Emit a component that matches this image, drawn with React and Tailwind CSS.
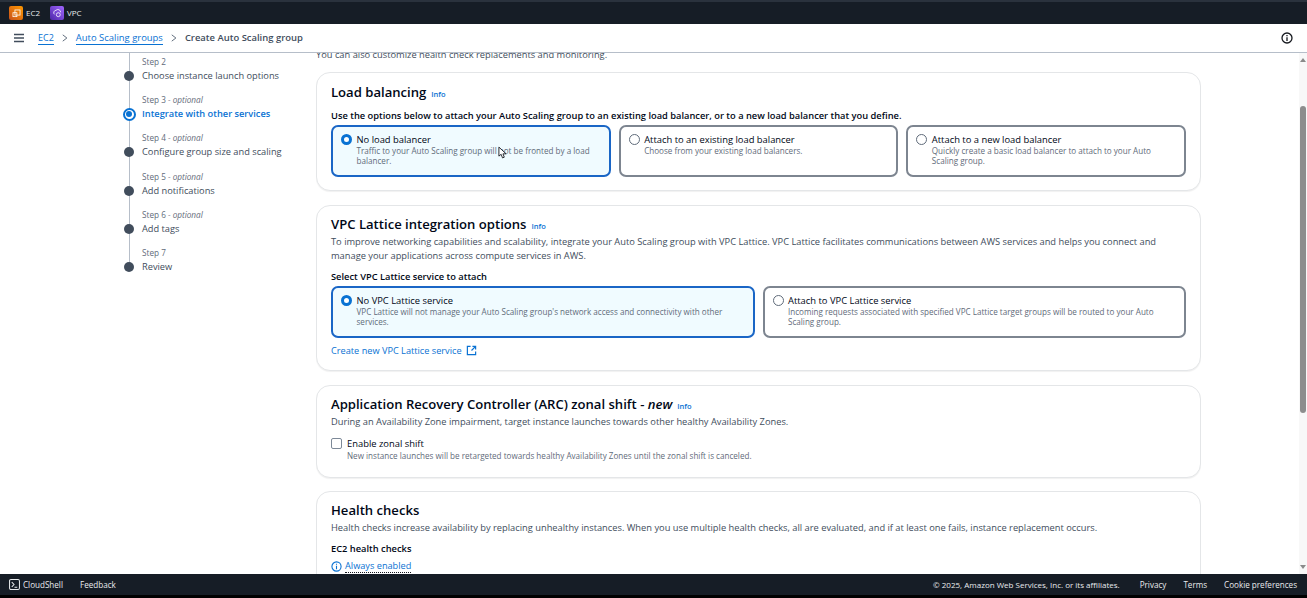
import React from "react";

const Radio = ({ on }) =>
  on ? (
    <span className="mt-[1px] h-[11px] w-[11px] shrink-0 rounded-full border-[3.5px] border-[#0972d3] bg-white" />
  ) : (
    <span className="mt-[1px] h-[11px] w-[11px] shrink-0 rounded-full border border-[#5f6b7a] bg-white" />
  );

const Tile = ({ on, title, desc }) => (
  <div
    className={
      "flex h-[52px] gap-[4.5px] rounded-[7px] border-2 pl-[8px] pr-[8px] pt-[5.5px] " +
      (on ? "border-[#1a66c6] bg-[#f0fbff]" : "border-[#7d8590] bg-white")
    }
  >
    <Radio on={on} />
    <div className="min-w-0">
      <div className="text-[9.4px] font-medium leading-[13px] text-[#000716]">{title}</div>
      <div className="text-[8.1px] leading-[10.5px] text-[#5f6b7a]">{desc}</div>
    </div>
  </div>
);

const Info = () => <span className="ml-[5px] text-[7.5px] font-semibold text-[#0972d3]">Info</span>;

const Card = ({ className, children }) => (
  <section className={"rounded-[14px] border border-[#e4e6e8] bg-white px-[14px] shadow-[0_1px_1px_rgba(0,7,22,0.06)] " + className}>
    {children}
  </section>
);

const Dot = ({ active }) =>
  active ? (
    <span className="z-10 flex h-[13px] w-[13px] shrink-0 items-center justify-center rounded-full border-2 border-[#0972d3] bg-white">
      <span className="h-[6px] w-[6px] rounded-full bg-[#0972d3]" />
    </span>
  ) : (
    <span className="z-10 h-[10px] w-[10px] shrink-0 rounded-full bg-[#414d5c]" />
  );

const Step = ({ n, opt, title, active }) => (
  <div className="h-[38.2px]">
    <div className="pl-[142px] text-[8.2px] leading-[12px] text-[#5f6b7a]">
      Step {n}
      {opt && <span className="italic"> - optional</span>}
    </div>
    <div className="mt-[1px] flex h-[14px] items-center">
      <div className="flex w-[142px] justify-end pr-[6px]">
        <div className="flex w-[14px] justify-center">
          <Dot active={active} />
        </div>
      </div>
      <span className={"text-[9.25px] leading-[14px] " + (active ? "font-semibold text-[#0972d3]" : "text-[#414d5c]")}>{title}</span>
    </div>
  </div>
);

const Logo = ({ from, to, children }) => (
  <span className="flex h-[14px] w-[14px] items-center justify-center rounded-[2px]" style={{ background: `linear-gradient(45deg, ${from}, ${to})` }}>
    {children}
  </span>
);

const Chevron = () => (
  <svg viewBox="0 0 8 10" className="mx-[8px] h-[10px] w-[6px]" fill="none" stroke="#5f6b7a" strokeWidth="1.300">
    <path d="M1 0.800l5.500 4.200-5.500 4.200" />
  </svg>
);

export default function App() {
  return (
    <div className="flex h-[598px] w-[1307px] flex-col overflow-hidden bg-white font-['Open_Sans','Noto_Sans',sans-serif] text-[#000716]">
      {/* top nav */}
      <header className="flex h-[24px] shrink-0 items-center border-t-[2px] border-[#2a323d] bg-[#161d26] pl-[9px] text-[8px] font-medium text-[#e9ebed]">
        <Logo from="#c8511b" to="#ff9900">
          <svg viewBox="0 0 14 14" className="h-[11px] w-[11px]" fill="none" stroke="#fff" strokeWidth="1">
            <rect x="5" y="2.500" width="6.500" height="6.500" />
            <rect x="2.500" y="6" width="5" height="5" />
          </svg>
        </Logo>
        <span className="ml-[3px] w-[14px]">EC2</span>
        <span className="ml-[10px]">
          <Logo from="#4d27a8" to="#a166ff">
            <svg viewBox="0 0 14 14" className="h-[11px] w-[11px]" fill="none" stroke="#fff" strokeWidth="1">
              <path d="M3 8a3 3 0 0 1 2-5 3.500 3.500 0 0 1 6 2.500" />
              <circle cx="8" cy="8.500" r="2.500" />
            </svg>
          </Logo>
        </span>
        <span className="ml-[3px]">VPC</span>
      </header>

      {/* breadcrumb */}
      <div className="flex h-[29px] shrink-0 items-center border-b border-[#b6bec9] pl-[14px] pr-[14px] text-[9.45px] font-semibold">
        <svg viewBox="0 0 10 10" className="mr-[14px] h-[10px] w-[10px]" stroke="#414d5c" strokeWidth="1.300">
          <path d="M0 1.500h10M0 5h10M0 8.500h10" />
        </svg>
        <span className="border-b border-[#0972d3] text-[9px] font-medium leading-[12px] text-[#0972d3]">EC2</span>
        <Chevron />
        <span className="border-b border-[#0972d3] font-medium leading-[12px] text-[#0972d3]">Auto Scaling groups</span>
        <Chevron />
        <span className="text-[#414d5c]">Create Auto Scaling group</span>
        <svg viewBox="0 0 12 12" className="ml-auto h-[12px] w-[12px]" fill="none" stroke="#16191f" strokeWidth="1.300">
          <circle cx="6" cy="6" r="5" />
          <path d="M6 5.200V9M6 3v1.200" />
        </svg>
      </div>

      {/* body */}
      <div className="flex min-h-0 flex-1 overflow-hidden">
        {/* steps */}
        <nav className="relative w-[316px] shrink-0 pt-[3px]">
          <div className="absolute left-[129px] top-0 h-[215px] w-px bg-[#b6bec9]" />
          <Step n={2} title="Choose instance launch options" />
          <Step n={3} opt title="Integrate with other services" active />
          <Step n={4} opt title="Configure group size and scaling" />
          <Step n={5} opt title="Add notifications" />
          <Step n={6} opt title="Add tags" />
          <Step n={7} title="Review" />
        </nav>

        {/* content */}
        <main className="w-[885px] shrink-0 overflow-hidden">
          <p className="mt-[-4px] h-[23px] text-[9.3px] leading-[12px] text-[#414d5c]">
            You can also customize health check replacements and monitoring.
          </p>

          <Card className="relative h-[119px]">
            <h2 className="mt-[10px] text-[13.1px] font-semibold leading-[18px]">
              Load balancing<Info />
            </h2>
            <p className="mt-[6px] text-[9.3px] font-semibold leading-[13px]">
              Use the options below to attach your Auto Scaling group to an existing load balancer, or to a new load balancer that you define.
            </p>
            <div className="mt-[3px] grid grid-cols-3 gap-[8px]">
              <Tile on title="No load balancer" desc="Traffic to your Auto Scaling group will not be fronted by a load balancer." />
              <Tile title="Attach to an existing load balancer" desc="Choose from your existing load balancers." />
              <Tile title="Attach to a new load balancer" desc="Quickly create a basic load balancer to attach to your Auto Scaling group." />
            </div>
            <svg viewBox="0 0 10 14" className="absolute left-[181px] top-[73px] h-[13px] w-[9px]" fill="#fff" stroke="#16191f" strokeWidth="1">
              <path d="M1 1v10l2.500-2 1.500 4 2-.800-1.500-3.700H9z" />
            </svg>
          </Card>

          <Card className="mt-[14px] h-[166px]">
            <h2 className="mt-[9px] text-[13.1px] font-semibold leading-[18px]">
              VPC Lattice integration options<Info />
            </h2>
            <p className="mt-0 text-[9.3px] leading-[14px] text-[#414d5c]">
              To improve networking capabilities and scalability, integrate your Auto Scaling group with VPC Lattice. VPC Lattice facilitates communications between AWS services and helps you connect and manage your applications across compute services in AWS.
            </p>
            <p className="mt-[7px] text-[9.3px] font-semibold leading-[13px]">Select VPC Lattice service to attach</p>
            <div className="mt-[3px] grid grid-cols-2 gap-[8px]">
              <Tile on title="No VPC Lattice service" desc="VPC Lattice will not manage your Auto Scaling group's network access and connectivity with other services." />
              <Tile title="Attach to VPC Lattice service" desc="Incoming requests associated with specified VPC Lattice target groups will be routed to your Auto Scaling group." />
            </div>
            <div className="mt-[6px] flex items-center text-[9.2px] font-medium leading-[13px] text-[#0972d3]">
              Create new VPC Lattice service
              <svg viewBox="0 0 12 12" className="ml-[4px] h-[11px] w-[11px]" fill="none" stroke="#0972d3" strokeWidth="1.300">
                <path d="M5 1.500H1.500v9h9V7M7 1.500h3.500V5M10.500 1.500L6 6" />
              </svg>
            </div>
          </Card>

          <Card className="mt-[14px] h-[93px]">
            <h2 className="mt-[9px] text-[13.1px] font-semibold leading-[18px]">
              Application Recovery Controller (ARC) zonal shift - <em>new</em>
              <Info />
            </h2>
            <p className="mt-0 text-[9.3px] leading-[14px] text-[#414d5c]">
              During an Availability Zone impairment, target instance launches towards other healthy Availability Zones.
            </p>
            <div className="mt-[8px] flex gap-[5px]">
              <span className="mt-[1px] h-[11px] w-[11px] shrink-0 rounded-[2px] border border-[#7d8998]" />
              <div>
                <div className="text-[9.4px] leading-[13px]">Enable zonal shift</div>
                <div className="text-[8.1px] leading-[11px] text-[#5f6b7a]">
                  New instance launches will be retargeted towards healthy Availability Zones until the zonal shift is canceled.
                </div>
              </div>
            </div>
          </Card>

          <Card className="mt-[13px] h-[120px]">
            <h2 className="mt-[9px] text-[13.1px] font-semibold leading-[18px]">Health checks</h2>
            <p className="mt-[2px] text-[9.3px] leading-[14px] text-[#414d5c]">
              Health checks increase availability by replacing unhealthy instances. When you use multiple health checks, all are evaluated, and if at least one fails, instance replacement occurs.
            </p>
            <p className="mt-[7px] text-[9.3px] font-semibold leading-[13px]">EC2 health checks</p>
            <div className="mt-[4px] flex items-center text-[9.2px] leading-[13px] text-[#0972d3]">
              <svg viewBox="0 0 12 12" className="mr-[3px] h-[11px] w-[11px]" fill="none" stroke="#0972d3" strokeWidth="1.200">
                <circle cx="6" cy="6" r="5" />
                <path d="M6 5.200V9M6 3v1.200" />
              </svg>
              <span className="border-b border-dotted border-[#16191f]">Always enabled</span>
            </div>
          </Card>
        </main>

        {/* scrollbar */}
        <div className="ml-auto flex w-[8px] shrink-0 flex-col items-center bg-[#f8f8f8]">
          <span className="mt-[5px] h-0 w-0 border-x-[3px] border-b-[4px] border-x-transparent border-b-[#8a8a8a]" />
          <span className="mt-[44px] h-[307px] w-[6px] rounded-full bg-[#8d8d8d]" />
          <span className="mt-auto mb-[5px] h-0 w-0 border-x-[3px] border-t-[4px] border-x-transparent border-t-[#8a8a8a]" />
        </div>
      </div>

      {/* footer */}
      <footer className="flex h-[24px] shrink-0 items-start border-b-[3px] border-[#000] bg-[#161d26] text-[8.1px] font-medium leading-[21px] text-[#e9ebed]">
        <div className="flex h-[21px] w-full items-center pl-[9px] pr-[10px]">
          <svg viewBox="0 0 12 12" className="mr-[3px] h-[11px] w-[11px]" fill="none" stroke="#e9ebed" strokeWidth="1.100">
            <rect x="0.600" y="0.600" width="10.800" height="10.800" rx="1.500" />
            <path d="M3 3.500L5.500 6 3 8.500M6 9h3" />
          </svg>
          <span>CloudShell</span>
          <span className="ml-[17px]">Feedback</span>
          <span className="ml-auto text-[8px] font-normal">© 2025, Amazon Web Services, Inc. or its affiliates.</span>
          <span className="ml-[20px]">Privacy</span>
          <span className="ml-[17px]">Terms</span>
          <span className="ml-[17px]">Cookie preferences</span>
        </div>
      </footer>
    </div>
  );
}
